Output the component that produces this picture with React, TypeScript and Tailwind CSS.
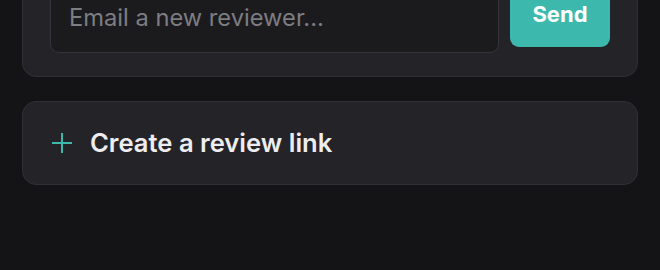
export default function App() {
  return (
    <div
      className="min-h-[270px] overflow-hidden bg-[#141416] px-[22px]"
      style={{ fontFamily: "Inter, 'Noto Sans', sans-serif" }}
    >
      <div className="-mt-[44px] flex flex-col gap-[24px]">
        <section className="rounded-[14px] border border-[#2f2f35] bg-[#232328] px-[27px] pb-[23px] pt-[27px]">
          <div className="flex items-start gap-[11px]">
            <input
              readOnly
              placeholder="Email a new reviewer..."
              className="h-[69px] flex-1 rounded-[9px] border border-[#34343a] bg-[#1b1b1e] px-[18px] pb-[2px] text-[23.7px] text-white outline-none placeholder:text-[#7d7d82]"
            />
            <button className="h-[63px] w-[100px] rounded-[9px] bg-[#3db8ad] pb-[2px] text-[22px] font-bold text-white">
              Send
            </button>
          </div>
        </section>

        <button className="flex h-[84px] items-center gap-[17px] rounded-[14px] border border-[#2f2f35] bg-[#232328] pl-[28px] text-left">
          <svg
            width="22"
            height="22"
            viewBox="0 0 22 22"
            fill="none"
            stroke="#3db8ad"
            strokeWidth="2"
            strokeLinecap="butt"
          >
            <path d="M11 1v20M1 11h20" />
          </svg>
          <span className="text-[25.6px] font-semibold text-[#ededf1]">
            Create a review link
          </span>
        </button>
      </div>
    </div>
  );
}
